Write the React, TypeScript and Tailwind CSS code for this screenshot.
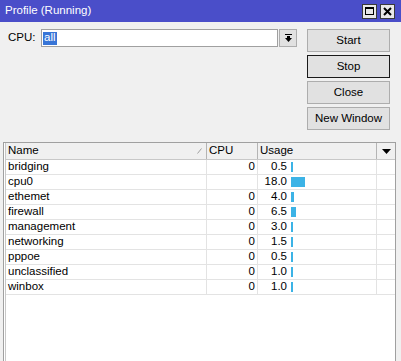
import React from "react";

const rows = [
  { name: "bridging", cpu: "0", usage: "0.5", bar: 2 },
  { name: "cpu0", cpu: "", usage: "18.0", bar: 14 },
  { name: "ethemet", cpu: "0", usage: "4.0", bar: 3 },
  { name: "firewall", cpu: "0", usage: "6.5", bar: 5 },
  { name: "management", cpu: "0", usage: "3.0", bar: 2 },
  { name: "networking", cpu: "0", usage: "1.5", bar: 2 },
  { name: "pppoe", cpu: "0", usage: "0.5", bar: 2 },
  { name: "unclassified", cpu: "0", usage: "1.0", bar: 2 },
  { name: "winbox", cpu: "0", usage: "1.0", bar: 2 },
];

function Btn({ label, focused }: { label: string; focused?: boolean }) {
  return (
    <div
      className={
        "w-[83px] h-[23px] flex items-center justify-center bg-[#e1e1e1] border " +
        (focused ? "border-[#1a1a1a]" : "border-[#adadad]")
      }
    >
      {label}
    </div>
  );
}

export default function App() {
  return (
    <div
      className="w-[401px] h-[361px] overflow-hidden bg-[#f0f0f0] text-[11.5px] text-black leading-none"
      style={{ fontFamily: '"Liberation Sans", Arial, sans-serif' }}
    >
      {/* Title bar */}
      <div className="h-[22px] bg-[#4a4ec9] flex items-center pl-[5px] pr-[6px]">
        <span className="text-white text-[11.5px]">Profile (Running)</span>
        <div className="ml-auto flex gap-[3px] items-center">
          <div className="w-[15px] h-[15px] bg-[#e8e8e8] border border-[#3a3a3a] flex items-center justify-center">
            <div className="w-[9px] h-[8px] border border-black border-t-2" />
          </div>
          <div className="w-[15px] h-[15px] bg-[#e8e8e8] border border-[#3a3a3a] flex items-center justify-center">
            <svg width="9" height="9" viewBox="0 0 9 9">
              <path d="M1 1 L8 8 M8 1 L1 8" stroke="#000" strokeWidth="2" />
            </svg>
          </div>
        </div>
      </div>

      {/* Top section */}
      <div className="flex pt-[7px] pl-[8px]">
        <div className="flex items-start">
          <div className="h-[18px] flex items-center w-[33px]">CPU:</div>
          <div className="w-[237px] h-[18px] bg-white border border-[#a0a0a0] flex items-center pl-[1px]">
            <span className="bg-[#3875d7] text-white px-[1px] h-[13px] flex items-center">all</span>
          </div>
          <div className="ml-[1px] w-[18px] h-[18px] bg-[#e1e1e1] border border-[#adadad] flex items-center justify-center">
            <svg width="7" height="8" viewBox="0 0 7 8">
              <rect x="0" y="0" width="7" height="1" fill="#000" />
              <rect x="2" y="2" width="3" height="2" fill="#000" />
              <path d="M0 4 L7 4 L3.5 8 Z" fill="#000" />
            </svg>
          </div>
        </div>
        <div className="ml-[10px] flex flex-col gap-[3px]">
          <Btn label="Start" />
          <Btn label="Stop" focused />
          <Btn label="Close" />
          <Btn label="New Window" />
        </div>
      </div>

      {/* Table */}
      <div className="mt-[12px] ml-[3px] w-[393px] h-[220px] bg-white border-l border-r border-t border-[#a0a0a0] pl-[1px]">
        <div className="border-l border-[#c8c8c8] h-full">
          {/* Header */}
          <div className="grid grid-cols-[201px_51px_119px_18px] h-[17px] bg-[#f0f0f0] border-b border-[#c8c8c8]">
            <div className="border-r border-[#b4b4b4] flex items-center pl-[2px] relative">
              Name
              <svg className="absolute right-[4px] top-[5px]" width="5" height="6" viewBox="0 0 5 6">
                <path d="M0.5 5.5 L4.5 0.5" stroke="#a0a0a0" strokeWidth="1" />
              </svg>
            </div>
            <div className="border-r border-[#b4b4b4] flex items-center pl-[2px]">CPU</div>
            <div className="border-r border-[#b4b4b4] flex items-center pl-[2px]">Usage</div>
            <div className="flex items-center justify-center">
              <svg width="9" height="5" viewBox="0 0 9 5">
                <path d="M0 0 L9 0 L4.5 5 Z" fill="#000" />
              </svg>
            </div>
          </div>
          {rows.map((r) => (
            <div
              key={r.name}
              className="grid grid-cols-[201px_51px_119px_18px] h-[15px] border-b border-[#e3e3e3]"
            >
              <div className="border-r border-[#e3e3e3] flex items-center pl-[2px]">{r.name}</div>
              <div className="border-r border-[#e3e3e3] flex items-center justify-end pr-[2px]">{r.cpu}</div>
              <div className="border-r border-[#e3e3e3] flex items-center">
                <span className="w-[29px] text-right">{r.usage}</span>
                <span className="ml-[4px] h-[10px] bg-[#3cb3e6]" style={{ width: r.bar }} />
              </div>
              <div />
            </div>
          ))}
        </div>
      </div>
    </div>
  );
}
